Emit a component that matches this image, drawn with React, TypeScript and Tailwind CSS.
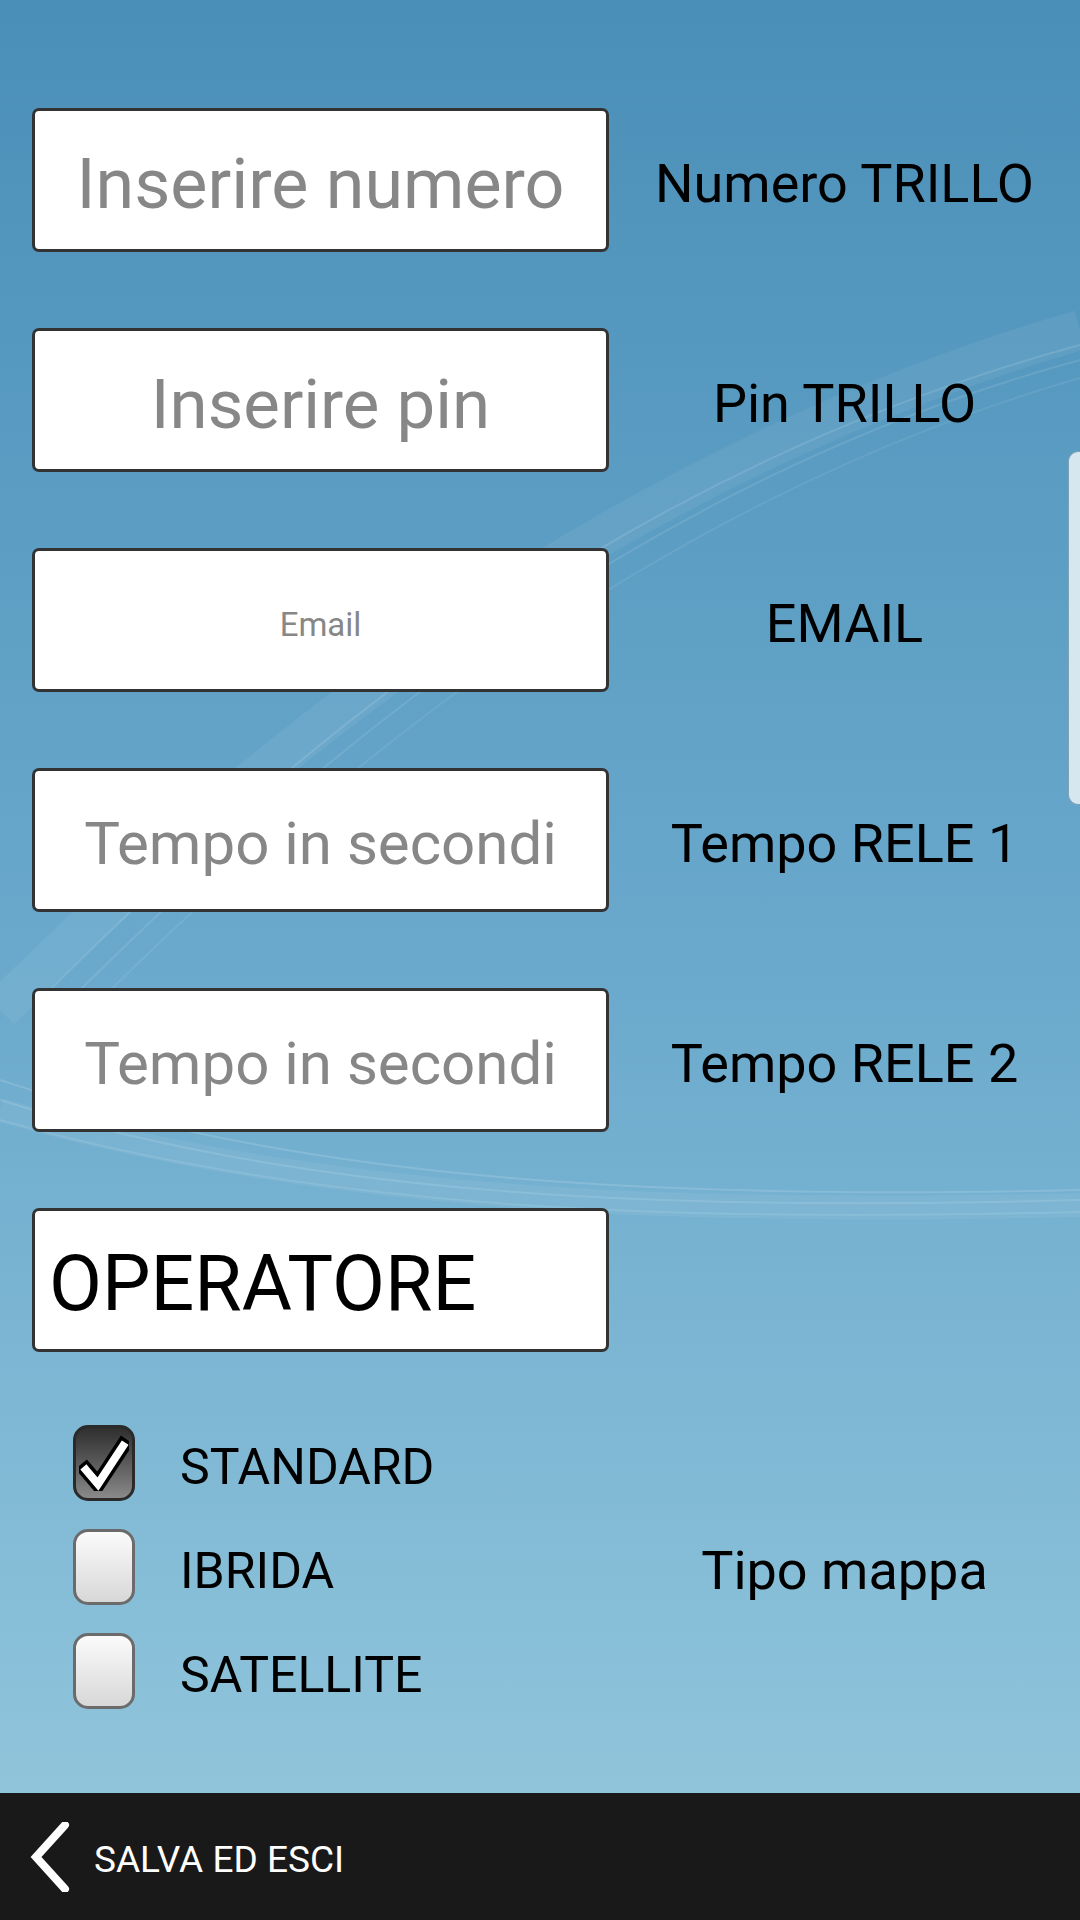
import React from "react";

const font = { fontFamily: "Roboto, 'Noto Sans', sans-serif" };

function Field({ placeholder, size, label, dark }: { placeholder: string; size: string; label?: string; dark?: boolean }) {
  return (
    <div className="flex items-center h-[144px]">
      <div
        className={`w-[577px] h-[144px] bg-white border-[3px] border-[#333333] rounded-[7px] flex items-center ${dark ? "justify-start pl-[14px]" : "justify-center"}`}
      >
        <span className={`${size} ${dark ? "text-black" : "text-[#878787]"} leading-none whitespace-nowrap translate-y-[4px]`}>{placeholder}</span>
      </div>
      <div className="flex-1 flex justify-center">
        {label && <span className="text-[54px] text-black leading-none whitespace-nowrap translate-y-[4px]">{label}</span>}
      </div>
    </div>
  );
}

function Check({ checked }: { checked?: boolean }) {
  if (checked) {
    return (
      <div className="w-[62px] h-[76px] rounded-[15px] border-[3px] border-[#2a2a2a] bg-gradient-to-b from-[#2f2f2f] to-[#8a8a8a] flex items-center justify-center">
        <svg width="50" height="56" viewBox="0 0 50 56">
          <path d="M7 35 L19 49 L44 11" fill="none" stroke="#000" strokeWidth="15" strokeLinejoin="miter" strokeLinecap="square" />
          <path d="M7 35 L19 49 L44 11" fill="none" stroke="#fff" strokeWidth="8" strokeLinejoin="miter" strokeLinecap="square" />
        </svg>
      </div>
    );
  }
  return (
    <div className="w-[62px] h-[76px] rounded-[15px] border-[3px] border-[#6b6b6b] bg-gradient-to-b from-[#fbfbfb] to-[#d8d8d8]" />
  );
}

export default function App() {
  return (
    <div
      style={font}
      className="relative w-[1080px] h-[1920px] overflow-hidden flex flex-col bg-gradient-to-b from-[#4a8fb8] via-[#6aa9cc] to-[#95c8dd]"
    >
      <svg className="absolute inset-0 pointer-events-none" width="1080" height="1920" viewBox="0 0 1080 1920">
        <g fill="none" stroke="#ffffff">
          <path d="M0 1010 C 250 760, 600 470, 1080 330" strokeOpacity="0.06" strokeWidth="40" />
          <path d="M40 1000 C 300 740, 620 470, 1080 345" strokeOpacity="0.12" strokeWidth="2" />
          <path d="M60 1010 C 320 750, 640 480, 1080 360" strokeOpacity="0.10" strokeWidth="2" />
          <path d="M80 1020 C 340 760, 660 500, 1080 378" strokeOpacity="0.08" strokeWidth="2" />
          <path d="M0 1080 C 300 1180, 650 1200, 1080 1190" strokeOpacity="0.14" strokeWidth="2" />
          <path d="M0 1100 C 300 1195, 650 1212, 1080 1200" strokeOpacity="0.12" strokeWidth="2" />
          <path d="M0 1120 C 320 1210, 660 1222, 1080 1212" strokeOpacity="0.10" strokeWidth="2" />
          <path d="M0 1110 C 320 1200, 660 1215, 1080 1205" strokeOpacity="0.06" strokeWidth="24" />
        </g>
      </svg>

      <div className="relative flex-1 flex flex-col pt-[108px] pl-[32px] gap-[76px]">
        <Field placeholder="Inserire numero" size="text-[70px]" label="Numero TRILLO" />
        <Field placeholder="Inserire pin" size="text-[69px]" label="Pin TRILLO" />
        <Field placeholder="Email" size="text-[33px]" label="EMAIL" />
        <Field placeholder="Tempo in secondi" size="text-[60px]" label="Tempo RELE 1" />
        <Field placeholder="Tempo in secondi" size="text-[60px]" label="Tempo RELE 2" />
        <div className="-mb-[17px]">
          <Field placeholder="OPERATORE" size="text-[77px]" dark />
        </div>
        <div className="flex items-center">
          <div className="w-[577px] flex flex-col pl-[41px]">
            {[
              { t: "STANDARD", c: true },
              { t: "IBRIDA", c: false },
              { t: "SATELLITE", c: false },
            ].map((r) => (
              <div key={r.t} className="h-[104px] flex items-center gap-[45px]">
                <Check checked={r.c} />
                <span className="text-[50px] text-black leading-none translate-y-[4px]">{r.t}</span>
              </div>
            ))}
          </div>
          <div className="flex-1 flex justify-center">
            <span className="text-[54px] text-black leading-none translate-y-[4px]">Tipo mappa</span>
          </div>
        </div>
      </div>

      <div className="absolute right-0 top-[451px] w-[12px] h-[354px] rounded-l-[10px] bg-[#d6e7f0] border border-r-0 border-[#7f9fb3]" />

      <div className="relative h-[127px] bg-[#191919] flex items-center">
        <svg className="ml-[30px]" width="40" height="70" viewBox="0 0 40 70">
          <polyline points="35,3 6,35 35,67" fill="none" stroke="#ffffff" strokeWidth="8" strokeLinecap="round" strokeLinejoin="miter" />
        </svg>
        <span className="ml-[24px] text-[37px] text-white leading-none translate-y-[3px]">SALVA ED ESCI</span>
      </div>
    </div>
  );
}
